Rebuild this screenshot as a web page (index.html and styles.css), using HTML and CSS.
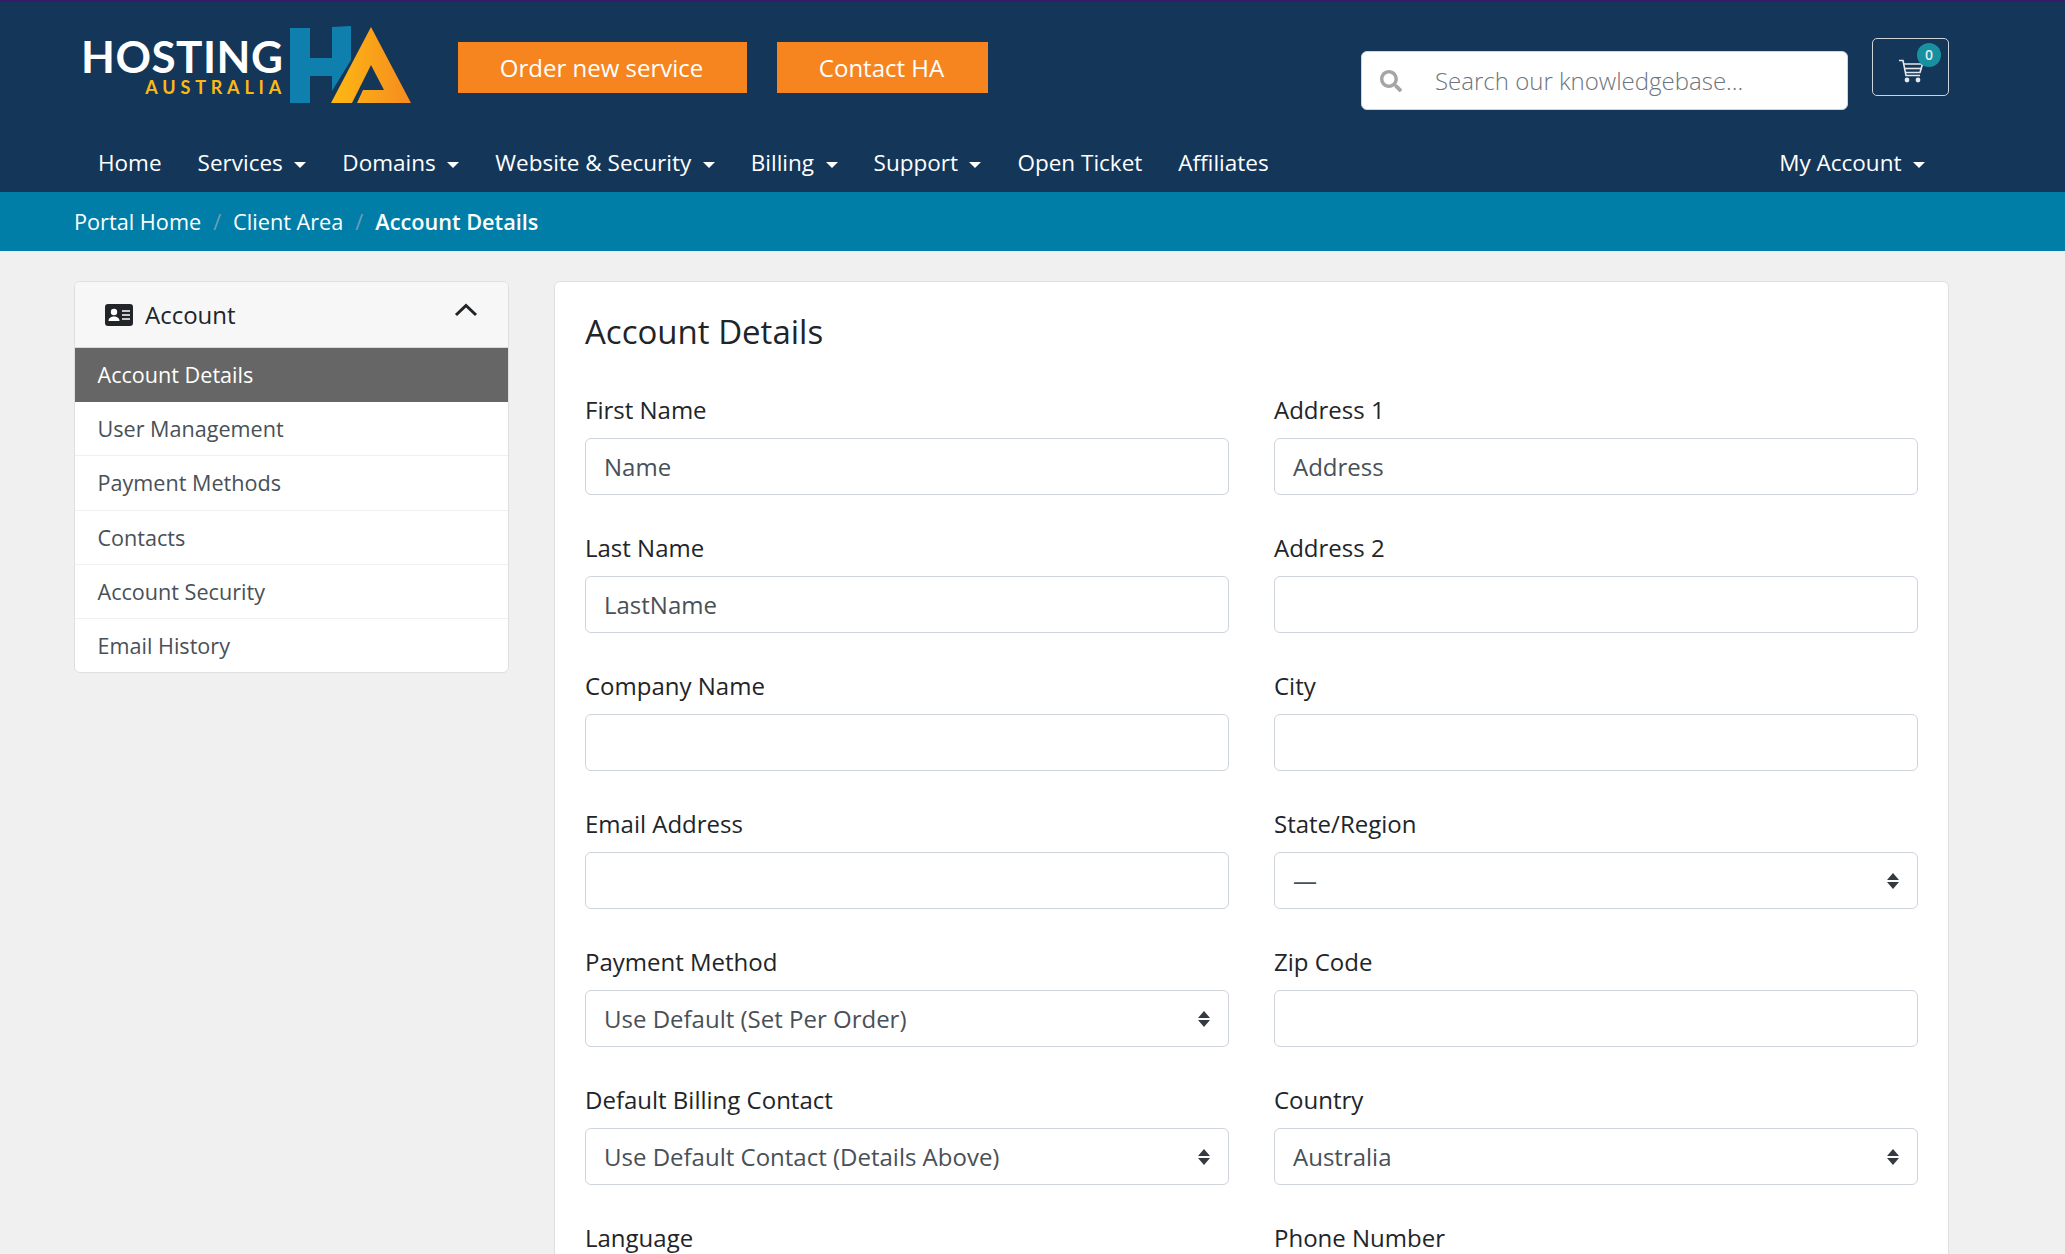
FILE: index.html
```html
<!doctype html>
<html lang="en">
<head>
    <meta charset="UTF-8">
    <title>Account Details</title>
    <link rel="stylesheet" href="styles.css">
</head>
<body>
<header class="header">
    <div class="topbar">
        <div class="logo">
            <div class="logo-words">
                <div class="logo-main">HOSTING</div>
                <div class="logo-sub">AUSTRALIA</div>
            </div>
            <svg class="logo-mark" width="130" height="100" viewBox="285 20 130 100">
                <defs>
                    <linearGradient id="logoA" x1="0" y1="0" x2="1" y2="0">
                        <stop offset="0" stop-color="#fdb913"/>
                        <stop offset="1" stop-color="#f68b1f"/>
                    </linearGradient>
                </defs>
                <polygon fill="#0f80ae" points="290,28 310,28 310,58 332,58 332,27 351,26 351,60 332,91 332,76 310,76 310,103 290,103"/>
                <path fill="url(#logoA)" d="M371 27 L411 103 L357 103 L363 90 L384 90 L371 65 L352 103 L331 103 Z"/>
            </svg>
        </div>
        <a class="btn-order">Order new service</a>
        <a class="btn-order btn-contact">Contact HA</a>
        <div class="search">
            <svg class="search-icon" width="22" height="22" viewBox="0 0 512 512"><path fill="#a5a5a5" d="M505 442.700L405.300 343c-4.500-4.500-10.600-7-17-7H372c27.600-35.300 44-79.700 44-128C416 93.100 322.900 0 208 0S0 93.100 0 208s93.100 208 208 208c48.300 0 92.700-16.400 128-44v16.300c0 6.400 2.500 12.500 7 17l99.700 99.700c9.400 9.400 24.600 9.400 33.900 0l28.300-28.300c9.400-9.400 9.400-24.600.1-34zM208 336c-70.700 0-128-57.200-128-128 0-70.700 57.200-128 128-128 70.700 0 128 57.200 128 128 0 70.700-57.200 128-128 128z"/></svg>
            <span class="search-text">Search our knowledgebase...</span>
        </div>
        <div class="cart">
            <svg width="26" height="24" viewBox="0 0 26 24" fill="none" stroke="#e6e9ec" stroke-width="1.600"><path d="M1 1.500h4l3 15h14"/><path d="M5.500 5h19l-2.500 8.500H7.500"/><path d="M6.500 9.500h17"/><circle cx="9" cy="21" r="1.600" fill="#e6e9ec"/><circle cx="20" cy="21" r="1.600" fill="#e6e9ec"/></svg>
            <span class="cart-badge">0</span>
        </div>
    </div>
    <nav class="mainnav">
        <a>Home</a>
        <a class="drop">Services</a>
        <a class="drop">Domains</a>
        <a class="drop">Website &amp; Security</a>
        <a class="drop">Billing</a>
        <a class="drop">Support</a>
        <a>Open Ticket</a>
        <a>Affiliates</a>
        <a class="drop nav-right">My Account</a>
    </nav>
</header>
<div class="crumbs">
    <a>Portal Home</a><i>/</i><a>Client Area</a><i>/</i><b>Account Details</b>
</div>
<div class="wrap">
    <aside class="side">
        <div class="side-head">
            <svg class="side-icon" width="28" height="22" viewBox="0 0 28 22"><rect width="28" height="22" rx="3" fill="#212529"/><circle cx="9" cy="8" r="3.200" fill="#fff"/><path fill="#fff" d="M3.500 17c0-3 2.400-4.500 5.500-4.500s5.500 1.500 5.500 4.500z"/><path stroke="#fff" stroke-width="1.500" d="M17 7h8M17 11h8M17 15h8"/></svg>
            <span class="side-title">Account</span>
            <svg class="side-chev" width="24" height="14" viewBox="0 0 24 14" fill="none" stroke="#212529" stroke-width="3"><path d="M2 12L12 2.500 22 12"/></svg>
        </div>
        <a class="side-item cur">Account Details</a>
        <a class="side-item">User Management</a>
        <a class="side-item">Payment Methods</a>
        <a class="side-item">Contacts</a>
        <a class="side-item">Account Security</a>
        <a class="side-item">Email History</a>
    </aside>
    <main class="card">
        <h1>Account Details</h1>
        <div class="fields">
            <div class="field"><label>First Name</label><div class="input">Name</div></div>
            <div class="field"><label>Address 1</label><div class="input">Address</div></div>
            <div class="field"><label>Last Name</label><div class="input">LastName</div></div>
            <div class="field"><label>Address 2</label><div class="input"></div></div>
            <div class="field"><label>Company Name</label><div class="input"></div></div>
            <div class="field"><label>City</label><div class="input"></div></div>
            <div class="field"><label>Email Address</label><div class="input"></div></div>
            <div class="field"><label>State/Region</label><div class="input select">—</div></div>
            <div class="field"><label>Payment Method</label><div class="input select">Use Default (Set Per Order)</div></div>
            <div class="field"><label>Zip Code</label><div class="input"></div></div>
            <div class="field"><label>Default Billing Contact</label><div class="input select">Use Default Contact (Details Above)</div></div>
            <div class="field"><label>Country</label><div class="input select">Australia</div></div>
            <div class="field"><label>Language</label><div class="input select"></div></div>
            <div class="field"><label>Phone Number</label><div class="input"></div></div>
        </div>
    </main>
</div>
</body>
</html>
```
FILE: styles.css
```css
*{
    margin: 0;
    padding: 0;
    box-sizing: border-box;
}
html, body{
    height: 100vh;
    overflow: hidden;
}
body{
    background: #f0f0f0;
    font-family: "Open Sans", sans-serif;
    font-size: 24px;
    color: #212529;
}
.header{
    background: #133659;
    border-top: 2px solid #3b1a6b;
    height: 192px;
    color: #fff;
}
.topbar{
    display: flex;
    align-items: flex-start;
    height: 130px;
    padding-left: 81px;
}
.logo{
    display: flex;
    width: 377px;
    height: 100px;
    margin-top: 18px;
    flex: none;
}
.logo-words{
    width: 201px;
    padding-top: 20px;
    margin-right: 3px;
    text-align: right;
    font-family: "Lato", sans-serif;
    font-weight: 700;
    white-space: nowrap;
}
.logo-main{
    height: 32px;
    line-height: 32px;
    font-size: 44px;
    letter-spacing: 0.5px;
    color: #fff;
}
.logo-sub{
    height: 13px;
    line-height: 13px;
    margin-top: 9px;
    font-size: 18px;
    letter-spacing: 4.8px;
    margin-right: -4px;
    color: #fdb913;
}
.btn-order{
    background: #f7851f;
    width: 289px;
    height: 51px;
    margin-top: 40px;
    margin-right: 30px;
    padding-right: 2px;
    text-align: center;
    line-height: 51px;
    font-size: 24px;
    flex: none;
}
.btn-contact{
    width: 211px;
    margin-right: 0;
}
.search{
    display: flex;
    align-items: center;
    background: #fff;
    border: 1px solid #ced4da;
    border-radius: 6px;
    width: 487px;
    height: 59px;
    margin-top: 49px;
    margin-left: 373px;
    padding-left: 18px;
    flex: none;
}
.search-icon{
    margin-right: 33px;
}
.search-text{
    font-size: 24px;
    font-weight: 300;
    color: #6c757d;
}
.cart{
    position: relative;
    width: 77px;
    height: 58px;
    margin-top: 36px;
    margin-left: 24px;
    border: 1px solid #ced4da;
    border-radius: 5px;
    padding: 18px 0 0 25px;
    flex: none;
}
.cart-badge{
    position: absolute;
    top: 4px;
    left: 44px;
    width: 24px;
    height: 24px;
    border-radius: 50%;
    background: #17909f;
    color: #e6e9ec;
    font-size: 14px;
    font-weight: 600;
    line-height: 24px;
    text-align: center;
}
.mainnav{
    display: flex;
    height: 60px;
    align-items: center;
    padding-left: 80px;
    padding-right: 122px;
    font-size: 22.5px;
}
.mainnav a{
    padding: 0 18px;
}
.mainnav .drop::after{
    content: "";
    display: inline-block;
    margin-left: 11.5px;
    vertical-align: 3px;
    border-top: 6px solid #fff;
    border-left: 6px solid transparent;
    border-right: 6px solid transparent;
}
.mainnav .nav-right{
    margin-left: auto;
}
.crumbs{
    background: #007ea8;
    height: 59px;
    line-height: 59px;
    padding-left: 74px;
    font-size: 21.7px;
    color: #fff;
}
.crumbs i{
    font-style: normal;
    color: #6c9fb5;
    padding: 0 12px;
}
.crumbs b{
    font-weight: 600;
}
.wrap{
    display: flex;
    align-items: flex-start;
    gap: 45px;
    padding: 30px 116px 0 74px;
}
.side{
    width: 435px;
    flex: none;
    background: #fff;
    border: 1px solid #dfdfdf;
    border-radius: 6px;
    overflow: hidden;
}
.side-head{
    display: flex;
    align-items: center;
    height: 66px;
    padding: 0 30px 0 30px;
    background: #f7f7f7;
    border-bottom: 1px solid #d8d8d8;
}
.side-icon{
    margin-right: 12px;
}
.side-title{
    font-size: 24px;
}
.side-chev{
    margin-left: auto;
    margin-bottom: 9px;
}
.side-item{
    display: block;
    height: 54.2px;
    line-height: 54px;
    padding-left: 22.5px;
    font-size: 21.6px;
    color: #495057;
    border-bottom: 1px solid #f0f0f0;
}
.side-item:last-child{
    border-bottom: 0;
    height: 53px;
}
.side-item.cur{
    background: #666;
    color: #fff;
    border-bottom: 0;
}
.card{
    flex: 1;
    background: #fff;
    border: 1px solid #dfdfdf;
    border-radius: 6px;
    padding: 28px 30px 30px;
    min-height: 1200px;
}
.card h1{
    font-size: 33px;
    font-weight: 400;
    line-height: 44px;
    margin-bottom: 38px;
}
.fields{
    display: grid;
    grid-template-columns: 1fr 1fr;
    column-gap: 45px;
    row-gap: 35px;
}
.field label{
    display: block;
    line-height: 36px;
    margin-bottom: 10px;
    font-size: 24px;
}
.input{
    position: relative;
    height: 57px;
    line-height: 56px;
    padding-left: 18px;
    background: #fff;
    border: 1px solid #ced4da;
    border-radius: 6px;
    color: #495057;
    font-size: 24px;
}
.select::before, .select::after{
    content: "";
    position: absolute;
    right: 18px;
    border-left: 6px solid transparent;
    border-right: 6px solid transparent;
}
.select::before{
    top: 20px;
    border-bottom: 7px solid #343a40;
}
.select::after{
    top: 29px;
    border-top: 7px solid #343a40;
}
```
